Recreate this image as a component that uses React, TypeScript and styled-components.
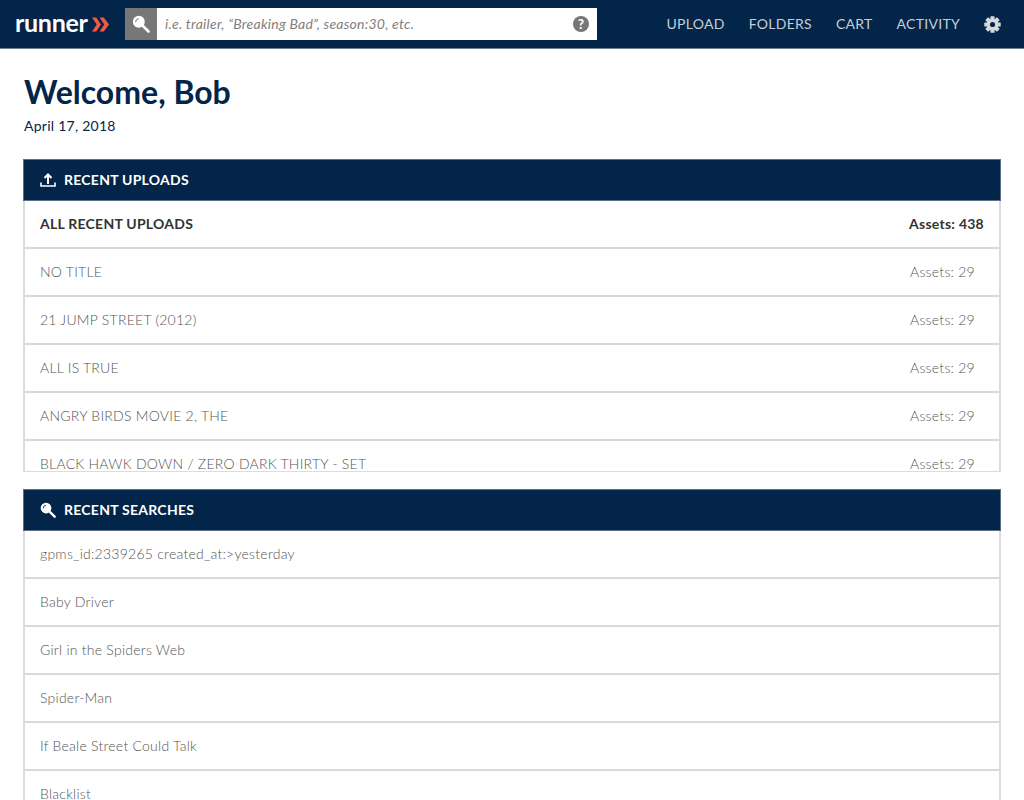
import React from "react";
import styled, { createGlobalStyle } from "styled-components";

const uploads = [
  "NO TITLE",
  "21 JUMP STREET (2012)",
  "ALL IS TRUE",
  "ANGRY BIRDS MOVIE 2, THE",
  "BLACK HAWK DOWN / ZERO DARK THIRTY - SET",
];

const searches = [
  "gpms_id:2339265 created_at:>yesterday",
  "Baby Driver",
  "Girl in the Spiders Web",
  "Spider-Man",
  "If Beale Street Could Talk",
  "Blacklist",
];

function SearchIcon({ size = 18, bg }: { size?: number; bg: string }) {
  return (
    <svg width={size} height={size} viewBox="0 0 18 18" fill="none">
      <circle cx="6.8" cy="6.8" r="6" fill="currentColor" />
      <path d="M10.5 10.5l6 6" stroke="currentColor" strokeWidth="2.6" strokeLinecap="round" />
      <path d="M3.6 6.8a3.2 3.2 0 0 1 2.8-3.2" stroke={bg} strokeWidth="1" strokeLinecap="round" />
    </svg>
  );
}

function UploadIcon() {
  return (
    <svg width="16" height="14" viewBox="0 0 16 14" fill="none" stroke="currentColor" strokeWidth="2">
      <path d="M8 11V2M4.5 5L8 1.5 11.5 5" />
      <path d="M1 9.5V13H15V9.5" strokeWidth="1.6" />
    </svg>
  );
}

function GearIcon() {
  const teeth = [0, 45, 90, 135];
  return (
    <svg width="17" height="17" viewBox="0 0 18 18">
      {teeth.map((a) => (
        <rect key={a} x="6.8" y="0.3" width="4.4" height="17.4" rx="0.6" fill="currentColor" transform={`rotate(${a} 9 9)`} />
      ))}
      <circle cx="9" cy="9" r="6.2" fill="currentColor" />
      <circle cx="9" cy="9" r="2.7" fill="#03254a" />
    </svg>
  );
}

export default function App() {
  return (
    <>
      <GlobalStyle />
      <TopBar>
        <Logo>
          <LogoWord>runner</LogoWord>
          <svg width="17" height="15" viewBox="0 0 18 15">
            <path d="M0 0h4.5L9.5 7.5 4.5 15H0l5-7.5z" fill="#f4583f" />
            <path d="M8 0h4.5L18 7.5 12.5 15H8l5-7.5z" fill="#f4583f" />
          </svg>
        </Logo>
        <SearchBox>
          <SearchButton>
            <SearchIcon bg="#777" />
          </SearchButton>
          <SearchInput readOnly placeholder="i.e. trailer, “Breaking Bad”, season:30, etc." />
          <HelpBadge>?</HelpBadge>
        </SearchBox>
        <Nav>
          <NavLink>UPLOAD</NavLink>
          <NavLink>FOLDERS</NavLink>
          <NavLink>CART</NavLink>
          <NavLink>ACTIVITY</NavLink>
          <GearButton>
            <GearIcon />
          </GearButton>
        </Nav>
      </TopBar>

      <Main>
        <Title>Welcome, Bob</Title>
        <DateLine>April 17, 2018</DateLine>

        <Panel>
          <PanelHeader>
            <UploadIcon />
            RECENT UPLOADS
          </PanelHeader>
          <ScrollList $height={270}>
            <Row $strong>
              <span>ALL RECENT UPLOADS</span>
              <Count $strong>Assets: 438</Count>
            </Row>
            {uploads.map((title) => (
              <Row key={title}>
                <span>{title}</span>
                <Count>Assets: 29</Count>
              </Row>
            ))}
          </ScrollList>
        </Panel>

        <Panel>
          <PanelHeader>
            <SearchIcon size={16} bg="#03254a" />
            RECENT SEARCHES
          </PanelHeader>
          <div>
            {searches.map((term) => (
              <Row key={term}>
                <span>{term}</span>
              </Row>
            ))}
          </div>
        </Panel>
      </Main>
    </>
  );
}

const GlobalStyle = createGlobalStyle`
  html, body {
    margin: 0;
    height: 100%;
    overflow: hidden;
    background: #fff;
    font-family: Lato, "Liberation Sans", sans-serif;
  }
`;

const TopBar = styled.header`
  display: flex;
  align-items: center;
  height: 48px;
  background: #03254a;
  border-bottom: 1px solid #6c7f96;
  padding: 0 24px 0 16px;
`;

const Logo = styled.div`
  display: flex;
  align-items: center;
  gap: 4px;
  width: 109px;
  color: #fff;
`;

const LogoWord = styled.span`
  font-size: 25px;
  font-weight: 700;
  letter-spacing: -0.3px;
  line-height: 24px;
  margin-top: -4px;
  margin-left: -1px;
`;

const SearchBox = styled.div`
  display: flex;
  align-items: center;
  width: 472px;
  height: 32px;
  background: #fff;
`;

const SearchButton = styled.div`
  display: flex;
  align-items: center;
  justify-content: center;
  width: 32px;
  height: 32px;
  background: #777;
  color: #fff;
`;

const SearchInput = styled.input`
  flex: 1;
  height: 30px;
  margin-bottom: 2px;
  border: 0;
  outline: 0;
  padding: 0 8px;
  font-family: inherit;
  font-size: 14px;
  font-style: italic;
  letter-spacing: 0.24px;

  &::placeholder {
    color: #808080;
    opacity: 1;
  }
`;

const HelpBadge = styled.div`
  display: flex;
  align-items: center;
  justify-content: center;
  width: 16px;
  height: 16px;
  margin-right: 8px;
  border-radius: 50%;
  background: #777;
  color: #fff;
  font-size: 13px;
  font-weight: 900;
`;

const Nav = styled.nav`
  display: flex;
  align-items: center;
  gap: 24px;
  margin-left: auto;
  margin-top: -1px;
`;

const NavLink = styled.a`
  color: #c9ced6;
  font-size: 14px;
  letter-spacing: 0.28px;
`;

const GearButton = styled.div`
  display: flex;
  color: #d5d9de;
  margin: 1px -1px 0 0;
`;

const Main = styled.main`
  padding: 24px 23px 0 23px;
`;

const Title = styled.h1`
  margin: 0 0 0 1px;
  color: #03254a;
  font-size: 32px;
  font-weight: 700;
  line-height: 38px;
`;

const DateLine = styled.div`
  margin: 5px 0 23px 1px;
  color: #03254a;
  font-size: 14px;
  letter-spacing: 0.25px;
  line-height: 20px;
`;

const Panel = styled.section`
  margin-bottom: 17px;
  border: 2px solid #dcdcdc;
  border-width: 0 2px 1px;
`;

const PanelHeader = styled.div`
  display: flex;
  align-items: center;
  gap: 8px;
  box-sizing: border-box;
  height: 42px;
  margin: 0 -2px;
  padding: 0 16px 1px;
  background: #03254a;
  border: 1px solid #5d7088;
  color: #fff;
  font-size: 14px;
  font-weight: 700;
  letter-spacing: 0.25px;
`;

const ScrollList = styled.div<{ $height: number }>`
  height: ${(p) => p.$height}px;
  overflow: hidden;
`;

const Row = styled.div<{ $strong?: boolean }>`
  display: flex;
  align-items: center;
  justify-content: space-between;
  box-sizing: border-box;
  height: 48px;
  padding: 0 15px 2px;
  border-bottom: 2px solid #d9d9d9;
  color: ${(p) => (p.$strong ? "#333" : "#555")};
  font-size: 14px;
  font-weight: ${(p) => (p.$strong ? 700 : 300)};
  letter-spacing: 0.25px;
`;

const Count = styled.span<{ $strong?: boolean }>`
  margin-right: ${(p) => (p.$strong ? 0 : 9)}px;
`;
